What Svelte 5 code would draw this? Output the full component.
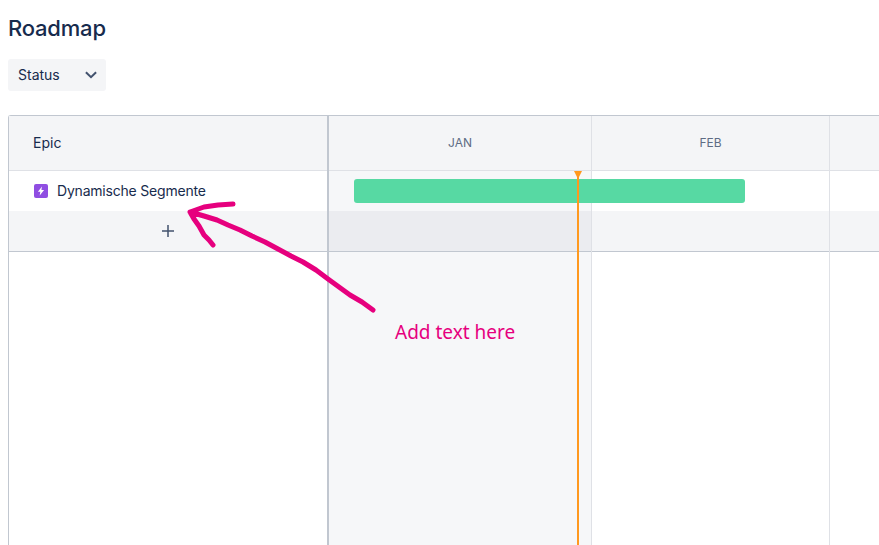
<script>
  const months = [
    { label: 'JAN', width: 263 },
    { label: 'FEB', width: 238 },
    { label: '', width: 50 }
  ];
</script>

<div class="page">
  <h1>Roadmap</h1>
  <button class="filter">
    <span class="filter-text">Status</span>
    <svg width="14" height="14" viewBox="0 0 14 14" fill="none"><path d="M1.9 4.2 7 9.2l5.1-5" stroke="#42526e" stroke-width="2" /></svg>
  </button>

  <div class="board">
    <div class="side">
      <div class="head epic"><span class="lift">Epic</span></div>
      <div class="row item">
        <span class="icon">
          <svg width="10" height="10" viewBox="0 0 10 10"><path d="M6 0.6 1.9 5.7h2.4L3.7 9.4 8.1 4.1H5.4z" fill="#fff" /></svg>
        </span>
        <span class="lift name">Dynamische Segmente</span>
      </div>
      <div class="add">
        <svg width="14" height="14" viewBox="0 0 14 14"><path d="M7 1v12M1 7h12" stroke="#42526e" stroke-width="1.5" /></svg>
      </div>
    </div>

    <div class="timeline">
      {#each months as m, i}
        <div class="month" class:current={i === 0} style="width:{m.width}px">
          <div class="head label"><span class="lift">{m.label}</span></div>
          <div class="row cell"></div>
          <div class="add cell-add"></div>
          <div class="rest"></div>
        </div>
      {/each}
      <div class="bar"></div>
      <div class="today"></div>
      <div class="today-mark"></div>
    </div>
  </div>

  <svg class="scribble" width="879" height="545" viewBox="0 0 879 545" fill="none">
    <path d="M373 310 362 302 350 295 339 287 328 279 316 270 303 262 291 256 278 249 265 242 252 236 240 230 228 225 217 220 204 216 190 212 M233 204 218 205 204 207 190 212 194 219 199 226 204 235 209 240 213 245" stroke="#e6007e" stroke-width="5" stroke-linecap="round" stroke-linejoin="round" />
  </svg>
  <div class="note">Add text here</div>
</div>

<style>
  :global(body) {
    margin: 0;
    background: #fff;
  }
  .page {
    position: relative;
    width: 879px;
    height: 545px;
    overflow: hidden;
    box-sizing: border-box;
    padding: 14px 0 0 8px;
    font-family: Inter, "Liberation Sans", sans-serif;
    color: #172b4d;
  }
  h1 {
    margin: 0;
    font-size: 22px;
    line-height: 28px;
    font-weight: 500;
    letter-spacing: -0.2px;
  }
  .filter {
    display: flex;
    align-items: center;
    justify-content: space-between;
    box-sizing: border-box;
    width: 98px;
    height: 32px;
    margin-top: 17px;
    padding: 0 8px 0 10px;
    border: 0;
    border-radius: 3px;
    background: #f4f5f7;
    font: 14px Inter, "Liberation Sans", sans-serif;
    color: #172b4d;
  }
  .filter-text {
    padding-bottom: 2px;
  }
  .board {
    display: flex;
    margin-top: 24px;
    width: 871px;
    height: 430px;
    box-sizing: border-box;
    border: 1px solid #c1c7d0;
    border-bottom: 0;
    border-right: 0;
    border-radius: 3px 0 0 0;
  }
  .side {
    flex: none;
    width: 318px;
    border-right: 2px solid #c1c7d0;
  }
  .head {
    box-sizing: border-box;
    height: 55px;
    display: flex;
    align-items: center;
    background: #f4f5f7;
    border-bottom: 1px solid #dfe1e6;
  }
  .lift {
    padding-bottom: 2px;
  }
  .epic {
    padding-left: 24px;
    font-size: 14px;
  }
  .row {
    height: 40px;
  }
  .item {
    display: flex;
    align-items: center;
    gap: 9px;
    padding-left: 25px;
    font-size: 14px;
  }
  .name {
    letter-spacing: -0.2px;
  }
  .icon {
    display: flex;
    align-items: center;
    justify-content: center;
    width: 14px;
    height: 14px;
    border-radius: 2px;
    background: #904ee2;
  }
  .add {
    box-sizing: border-box;
    height: 41px;
    display: flex;
    align-items: center;
    justify-content: center;
    background: #f4f5f7;
    border-bottom: 1px solid #c1c7d0;
  }
  .timeline {
    position: relative;
    flex: 1;
    display: flex;
    overflow: hidden;
  }
  .month {
    flex: none;
    box-sizing: border-box;
    border-right: 1px solid #dfe1e6;
    display: flex;
    flex-direction: column;
  }
  .label {
    justify-content: center;
    font-size: 12px;
    color: #5e6c84;
  }
  .current .cell,
  .current .rest {
    background: #f6f7f9;
  }
  .current .cell-add {
    background: #ebecf0;
  }
  .rest {
    flex: 1;
  }
  .bar {
    position: absolute;
    left: 25px;
    top: 63px;
    width: 391px;
    height: 24px;
    border-radius: 3px;
    background: #57d9a3;
  }
  .today {
    position: absolute;
    left: 248px;
    top: 55px;
    bottom: 0;
    width: 2px;
    background: #ff991f;
  }
  .today-mark {
    position: absolute;
    left: 245px;
    top: 55px;
    border-style: solid;
    border-width: 8px 4px 0;
    border-color: #ff991f transparent transparent;
  }
  .scribble {
    position: absolute;
    left: 0;
    top: 0;
  }
  .note {
    position: absolute;
    left: 395px;
    top: 320px;
    font: 19px/24px "Noto Sans", sans-serif;
    color: #e6007e;
  }
</style>
